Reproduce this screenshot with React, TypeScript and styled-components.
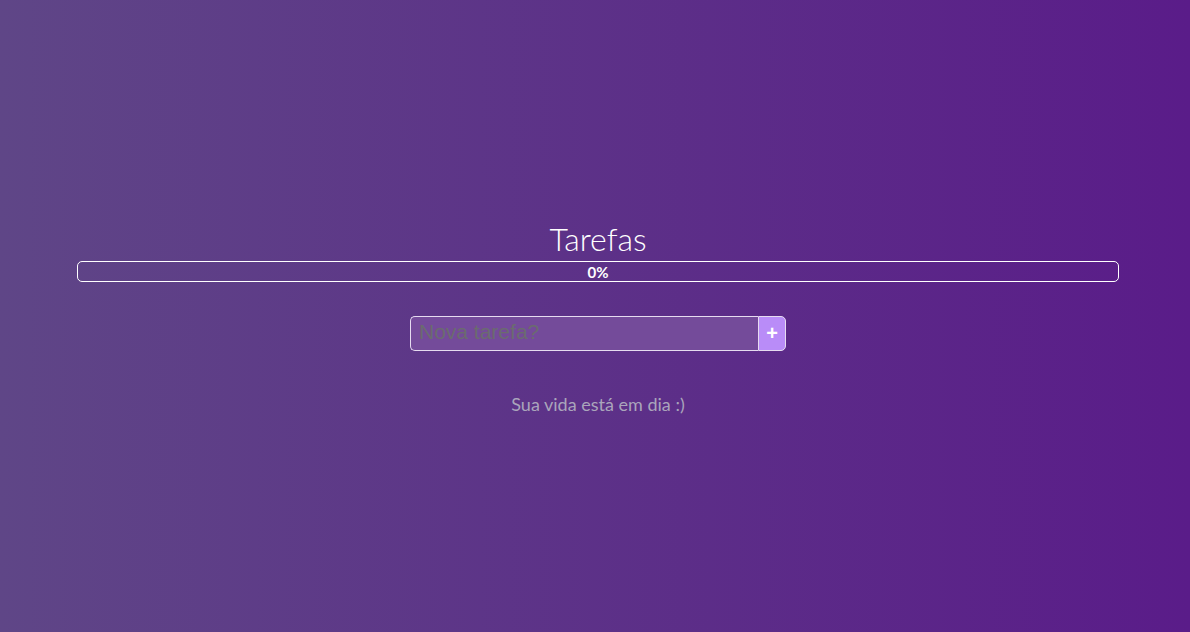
import React, { useState } from "react";
import styled, { createGlobalStyle } from "styled-components";

const Global = createGlobalStyle`
  html, body { margin: 0; padding: 0; height: 100%; }
  body {
    font-family: Lato, "Open Sans", sans-serif;
    background: linear-gradient(to right, #5f4687, #5a1c89);
    min-height: 100vh;
  }
  #root { min-height: 100vh; }
`;

const Page = styled.main`
  min-height: 632px;
  display: flex;
  flex-direction: column;
  justify-content: center;
  align-items: stretch;
  padding: 4px 71px 0 77px;
  box-sizing: border-box;
`;

const Title = styled.h1`
  margin: 0;
  text-align: center;
  font-family: Lato, sans-serif;
  font-weight: 300;
  font-size: 32px;
  line-height: 36px;
  color: #fff;
`;

const Progress = styled.div`
  margin-top: 4px;
  height: 21px;
  box-sizing: border-box;
  border: 1px solid #fff;
  border-radius: 5px;
  display: flex;
  align-items: center;
  justify-content: center;
  position: relative;
  overflow: hidden;
`;

const Fill = styled.div`
  position: absolute;
  left: 0;
  top: 0;
  bottom: 0;
  background: #b98cf8;
`;

const Percent = styled.span`
  position: relative;
  color: #fff;
  font-weight: 700;
  font-size: 15px;
  line-height: 1;
  margin-top: 2px;
`;

const Form = styled.form`
  margin-top: 34px;
  display: flex;
  justify-content: center;
`;

const Input = styled.input`
  width: 348px;
  height: 35px;
  box-sizing: border-box;
  border: 1px solid #e6dcf0;
  border-right: none;
  border-radius: 5px 0 0 5px;
  background: #744b9a;
  padding: 0 8px 3px;
  font-family: Arial, "Liberation Sans", sans-serif;
  font-weight: 400;
  font-size: 21px;
  color: #fff;
  outline: none;
  &::placeholder {
    color: #6b6b6f;
    font-family: Arial, "Liberation Sans", sans-serif;
    font-weight: 400;
    opacity: 1;
  }
`;

const AddButton = styled.button`
  width: 28px;
  height: 35px;
  box-sizing: border-box;
  border: 1px solid #e6dcf0;
  border-radius: 0 5px 5px 0;
  background: #b98cf8;
  color: #fff;
  font-family: Arial, "Liberation Sans", sans-serif;
  font-weight: 700;
  font-size: 20px;
  line-height: 1;
  padding: 0 0 2px;
  cursor: pointer;
`;

const Empty = styled.p`
  margin: 42px 0 0;
  text-align: center;
  font-family: Lato, sans-serif;
  font-size: 18px;
  color: #aaa5bb;
`;

export default function App() {
  const [value, setValue] = useState("");
  const progress = 0;
  return (
    <>
      <Global />
      <Page>
        <Title>Tarefas</Title>
        <Progress>
          <Fill style={{ width: `${progress}%` }} />
          <Percent>{progress}%</Percent>
        </Progress>
        <Form onSubmit={(e) => e.preventDefault()}>
          <Input
            placeholder="Nova tarefa?"
            value={value}
            onChange={(e) => setValue(e.target.value)}
          />
          <AddButton type="submit">+</AddButton>
        </Form>
        <Empty>Sua vida está em dia :)</Empty>
      </Page>
    </>
  );
}
